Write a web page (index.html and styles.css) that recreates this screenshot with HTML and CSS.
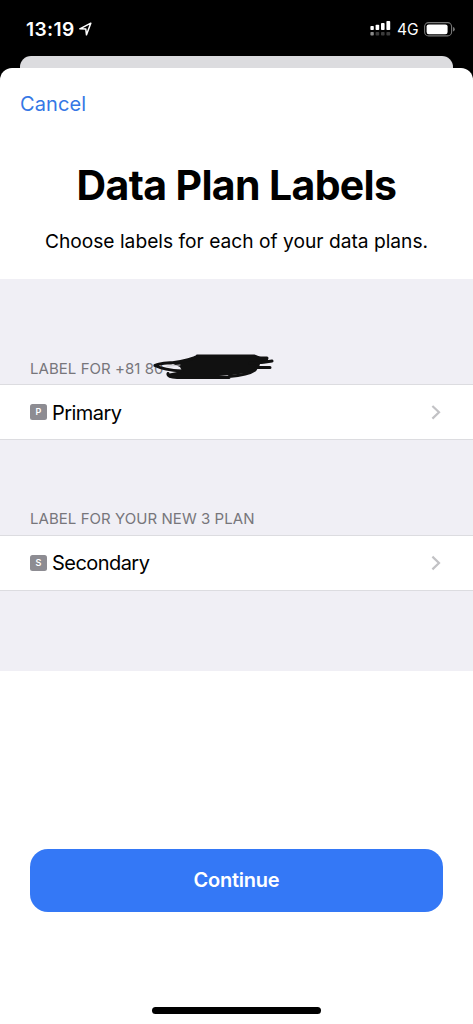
FILE: index.html
```html
<!DOCTYPE html>
<html lang="en">
<head>
<meta charset="utf-8">
<title>Data Plan Labels</title>
<link rel="stylesheet" href="styles.css">
</head>
<body>
<div class="screen">
  <header class="status">
    <span class="clock">13:19</span>
    <svg class="location" width="14" height="14" viewBox="0 0 14 14"><path d="M.8 6.8 11.8 1.2 7.5 12.8 6.8 7.1Z" fill="none" stroke="#fff" stroke-width="1.5" stroke-linejoin="round"/></svg>
    <svg class="signal" width="21" height="15" viewBox="0 0 21 15">
      <g fill="#fff"><rect x="0.4" y="5" width="3.4" height="4" rx=".8"/><rect x="5.6" y="3.7" width="3.6" height="5.3" rx=".8"/><rect x="11" y="2" width="3.6" height="7" rx=".8"/><rect x="16.4" y="0" width="3.8" height="9" rx=".8"/></g>
      <rect x="0.4" y="11" width="3.4" height="3.6" rx=".8" fill="#8a8a8a"/>
      <g fill="#3c3c3c"><rect x="5.6" y="11" width="3.6" height="3.6" rx=".8"/><rect x="11" y="11" width="3.6" height="3.6" rx=".8"/><rect x="16.4" y="11" width="3.8" height="3.6" rx=".8"/></g>
    </svg>
    <span class="network">4G</span>
    <svg class="battery" width="32" height="15" viewBox="0 0 32 15"><rect x=".6" y=".6" width="27" height="13.3" rx="4" fill="none" stroke="#777" stroke-width="1.1"/><rect x="2.6" y="2.4" width="21" height="9.8" rx="2.2" fill="#fff"/><path d="M29 5v4.6q1.8-.6 1.8-2.3T29 5Z" fill="#777"/></svg>
  </header>
  <div class="sheet-behind"></div>
  <main class="sheet">
    <nav class="nav"><a class="cancel">Cancel</a></nav>
    <h1 class="title">Data Plan Labels</h1>
    <p class="subtitle">Choose labels for each of your data plans.</p>
    <section class="groups">
      <div class="group-head first"><h2 class="group-label">LABEL FOR +81 80</h2>
        <svg class="scribble" width="124" height="28" viewBox="0 0 124 28" fill="none" stroke="#111" stroke-width="3" stroke-linecap="round" stroke-linejoin="round">
          <path d="M19 10 34 7 46 2.5 103 2.5 109 4 118 8 108 11 106 15 101 19 80 22 54 24 18 24 15 21 30 18 28 14Z" fill="#111" stroke="none"/>
          <path d="M45 3H102L107 5H115L114 8M120 8Q111 10 98 10M106 14.5H118M3 12.5Q10 9.5 25 9.5M3 12.5Q12 17 30 18M16 20.5Q15 24.5 25 24.5H77M77 23.5Q96 22 103 17L106 12M19 10Q40 7 46 3"/>
          <path d="M15 13.3 28 12" stroke="#c8c7cd" stroke-width=".9"/>
        </svg>
      </div>
      <div class="row"><span class="badge">P</span><span class="name primary">Primary</span>
        <svg class="chevron" width="10" height="16" viewBox="0 0 10 16"><path d="M1.4 2 8 8.3 1.4 14.6" fill="none" stroke="#c2c2c5" stroke-width="2.2"/></svg></div>
      <div class="group-head"><h2 class="group-label second">LABEL FOR YOUR NEW 3 PLAN</h2></div>
      <div class="row"><span class="badge">S</span><span class="name secondary">Secondary</span>
        <svg class="chevron" width="10" height="16" viewBox="0 0 10 16"><path d="M1.4 1.6 8 8 1.4 14.4" fill="none" stroke="#c2c2c5" stroke-width="2.2"/></svg></div>
    </section>
    <button class="continue">Continue</button>
    <div class="home-bar"></div>
  </main>
</div>
</body>
</html>
```
FILE: styles.css
```css
* { box-sizing: border-box; }
body { margin: 0; background: #000; font-family: Inter, "Liberation Sans", sans-serif; color: #000; }
h1, h2, p { margin: 0; font-weight: 400; }
svg { display: block; flex: none; }
.screen { width: 473px; height: 1024px; overflow: hidden; display: flex; flex-direction: column; background: #000; }
.status { height: 56px; flex: none; display: flex; align-items: flex-start; padding: 21px 18px 0 26px; color: #fff; }
.clock { width: 49px; font-size: 19.2px; line-height: 17px; font-weight: 600; letter-spacing: 0.35px; white-space: nowrap; }
.location { margin: 1px 0 0 4px; }
.signal { margin-left: auto; }
.network { width: 22px; margin-left: 6px; font-size: 15.5px; line-height: 17px; font-weight: 400; }
.battery { margin: 1px 0 0 5px; }
.status .battery { margin-right: -1px; }
.sheet-behind { height: 12px; flex: none; margin: 0 20px; border-radius: 11px 11px 0 0; background: #dcdcdf; }
.sheet { flex: 1; display: flex; flex-direction: column; background: #fff; border-radius: 12px 12px 0 0; }
.nav { height: 82px; padding: 23px 20px 0; }
.cancel { display: block; font-size: 20px; line-height: 26px; letter-spacing: 0.1px; color: #3577e5; }
.title { height: 70px; text-align: center; font-size: 41px; line-height: 70px; font-weight: 700; letter-spacing: -0.65px; white-space: nowrap; }
.subtitle { height: 59px; text-align: center; font-size: 19.2px; line-height: 43px; white-space: nowrap; }
.groups { height: 392px; flex: none; background: #f0eff5; }
.group-head { height: 95px; display: flex; align-items: flex-end; padding: 0 30px 6px; position: relative; }
.first { height: 105px; padding-bottom: 5px; }
.group-label { font-size: 15px; line-height: 20px; letter-spacing: 0.05px; color: #77767b; white-space: nowrap; }
.scribble { position: absolute; left: 152px; top: 74px; }
.row { height: 56px; display: flex; align-items: center; padding: 0 32px 0 30px; background: #fff; border: solid #dcdce0; border-width: 1px 0; }
.badge { width: 17px; height: 16px; margin-right: 5px; border-radius: 2.5px; background: #8d8c92; color: #fff; font-size: 9px; line-height: 16px; font-weight: 600; text-align: center; }
.name { font-size: 20px; line-height: 26px; letter-spacing: -0.55px; }
.primary { padding-top: 1px; }
.chevron { margin-left: auto; }
.continue { width: 413px; height: 63px; margin: 178px 0 0 30px; padding: 0; border: 0; border-radius: 18px; background: #3478f6; color: #fff; font: 600 20px/63px Inter, "Liberation Sans", sans-serif; letter-spacing: -0.25px; }
.home-bar { width: 169px; height: 7px; margin: 95px 0 0 152px; border-radius: 3.5px; background: #000; }
```
